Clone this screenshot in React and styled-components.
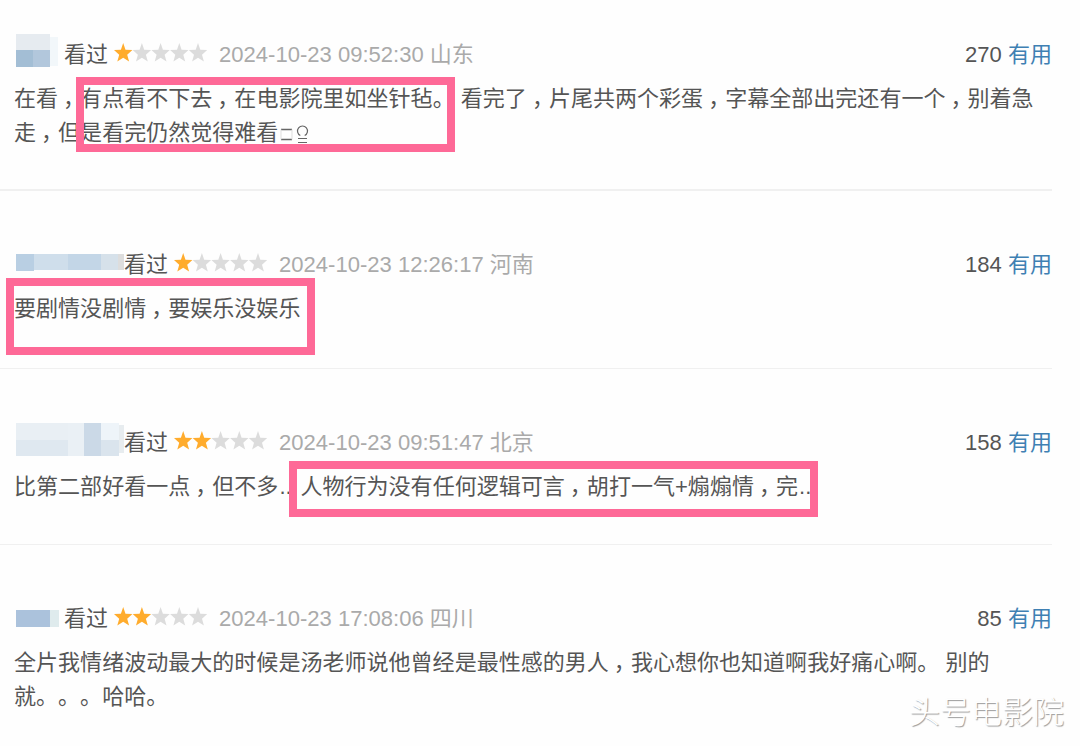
import React from 'react';
import styled, { createGlobalStyle } from 'styled-components';

const GlobalStyle = createGlobalStyle`
  body {
    margin: 0;
    background: #fefefe;
    font-family: "Liberation Sans", "Noto Sans CJK SC", sans-serif;
    font-size: 22.04px;
    color: #555;
    text-spacing-trim: space-all;
  }
`;

const Page = styled.main`
  position: relative;
  width: 1080px;
  height: 746px;
  overflow: hidden;
`;

const Review = styled.article`
  box-sizing: border-box;
  width: 1052px;
  height: ${({ $height }) => $height}px;
  padding: ${({ $top }) => $top}px 0 0 14px;
  border-bottom: ${({ $line }) => $line}px solid #f0f0f0;
`;

const Header = styled.header`
  display: flex;
  align-items: center;
  height: 34px;
  line-height: 34px;
  white-space: nowrap;
`;

const Name = styled.span`
  flex: none;
  width: ${({ $width }) => $width}px;
  height: 34px;

  svg {
    display: block;
  }
`;

const Stars = styled.span`
  display: flex;
  flex: none;
  width: 95px;
  margin: 0 11px 4px 5px;
`;

const Meta = styled.span`
  color: #aaa;
`;

const Useful = styled.span`
  margin-left: auto;

  a {
    color: #3f80b3;
  }
`;

const Body = styled.p`
  display: flex;
  flex-direction: column;
  margin: 10px 0 0;
  line-height: 34px;
  white-space: nowrap;
`;

const Comma = styled.span`
  display: inline-block;
  box-sizing: border-box;
  width: 22.04px;
  padding-left: 5px;
  font-feature-settings: "halt";
`;

const Dots = styled.span`
  display: inline-block;
  box-sizing: border-box;
  width: 22.04px;
  padding-left: 1px;
`;

const Missing = styled.svg`
  vertical-align: -5px;
`;

const Marker = styled.div`
  position: absolute;
  box-sizing: border-box;
  border: 8px solid #fe6997;
  left: ${({ $x }) => $x}px;
  top: ${({ $y }) => $y}px;
  width: ${({ $w }) => $w}px;
  height: ${({ $h }) => $h}px;
`;

const Watermark = styled.div`
  position: absolute;
  right: 16px;
  bottom: 11px;
  font-size: 31px;
  line-height: 44px;
  font-weight: 300;
  color: #fff;
  text-shadow: 1px 1px 1px #999;
  white-space: nowrap;
`;

const reviews = [
  {
    height: 191, top: 38, line: 2, nameWidth: 50, stars: 1,
    meta: '2024-10-23 09:52:30 山东', useful: 270,
    tiles: [
      [2, -4, 34, 16, '#e6ebf0'], [2, 12, 17, 17, '#a3bed5'], [19, 12, 17, 17, '#b2c7dc'],
      [36, -1, 8, 29, '#f2f7fa']
    ],
    lines: ['在看，有点看不下去，在电影院里如坐针毡。 看完了，片尾共两个彩蛋，字幕全部出完还有一个，别着急', '走，但是看完仍然觉得难看□♀']
  },
  {
    height: 178, top: 57, line: 1, nameWidth: 110, stars: 1,
    meta: '2024-10-23 12:26:17 河南', useful: 184,
    tiles: [
      [2, 6, 18, 17, '#b9cfe3'], [20, 6, 34, 16, '#cfdeeb'], [54, 6, 33, 16, '#c3d6e7'],
      [87, 6, 17, 16, '#d6e1ea'], [104, 6, 6, 16, '#ddd']
    ],
    lines: ['要剧情没剧情，要娱乐没娱乐']
  },
  {
    height: 176, top: 57, line: 1, nameWidth: 110, stars: 2,
    meta: '2024-10-23 09:51:47 北京', useful: 158,
    tiles: [
      [2, -3, 52, 17, '#e9eff4'], [2, 14, 52, 16, '#dfe8f0'], [54, -3, 16, 33, '#eaf0f5'],
      [70, -3, 17, 33, '#cbd9e7'], [87, -3, 18, 17, '#eef4f9'], [87, 14, 18, 16, '#dae4ed'],
      [105, -1, 5, 28, '#e7ecef']
    ],
    lines: ['比第二部好看一点，但不多…人物行为没有任何逻辑可言，胡打一气+煽煽情，完…']
  },
  {
    height: 190, top: 57, line: 0, nameWidth: 50, stars: 2,
    meta: '2024-10-23 17:08:06 四川', useful: 85,
    tiles: [[2, 8, 34, 17, '#abc2dc'], [36, 8, 9, 17, '#dfebed']],
    lines: ['全片我情绪波动最大的时候是汤老师说他曾经是最性感的男人，我心想你也知道啊我好痛心啊。 别的', '就。。。哈哈。']
  }
];

const Rating = ({ value }) => (
  <Stars>
    <svg width="95" height="22" viewBox="0 0 95 22">
      {[0, 1, 2, 3, 4].map((i) => (
        <path
          key={i}
          transform={`translate(${i * 18.7} 0)`}
          d="M10.2 1 12.5 7.7 19.4 8l-5.2 4.8 1.9 6.7-5.9-3.7-5.9 3.7 1.9-6.7L1 8l6.9-.3z"
          fill={i < value ? '#ffac2d' : '#dcdcdc'}
        />
      ))}
    </svg>
  </Stars>
);

const MissingGlyphs = () => (
  <Missing width="32" height="22" viewBox="0 0 32 22" fill="none" stroke="#666" strokeWidth="1.4">
    <path d="M3 6.5H14M3 16.5H14" />
    <path d="M3 6.5V16.5M14 6.5V16.5" stroke="#ddd" strokeWidth="1" />
    <path d="M22.3 12.5A5 5 0 1 1 26.7 12.5M20 15.5h9M20 19.5h9" strokeWidth="1.2" />
  </Missing>
);

// full-width commas and dots sit in the middle of their cell
const renderText = (text) => text.split(/(，|…|□♀)/).map((part, i) => {
  if (part === '，') return <Comma key={i}>，</Comma>;
  if (part === '…') return <Dots key={i}>...</Dots>;
  if (part === '□♀') return <MissingGlyphs key={i} />;
  return part;
});

const App = () => (
  <Page>
    <GlobalStyle />
    {reviews.map((review) => (
      <Review key={review.meta} $height={review.height} $top={review.top} $line={review.line}>
        <Header>
          <Name $width={review.nameWidth}>
            <svg width={review.nameWidth} height="34" overflow="visible">
              {review.tiles.map(([x, y, w, h, fill]) => (
                <rect key={`${x}-${y}`} x={x} y={y} width={w} height={h} fill={fill} />
              ))}
            </svg>
          </Name>
          <span>看过</span>
          <Rating value={review.stars} />
          <Meta>{review.meta}</Meta>
          <Useful>{review.useful} <a>有用</a></Useful>
        </Header>
        <Body>
          {review.lines.map((line) => (
            <span key={line}>{renderText(line)}</span>
          ))}
        </Body>
      </Review>
    ))}
    <Marker $x={76} $y={77} $w={379} $h={75} />
    <Marker $x={6} $y={278} $w={309} $h={77} />
    <Marker $x={289} $y={461} $w={529} $h={56} />
    <Watermark>头号电影院</Watermark>
  </Page>
);

export default App;
